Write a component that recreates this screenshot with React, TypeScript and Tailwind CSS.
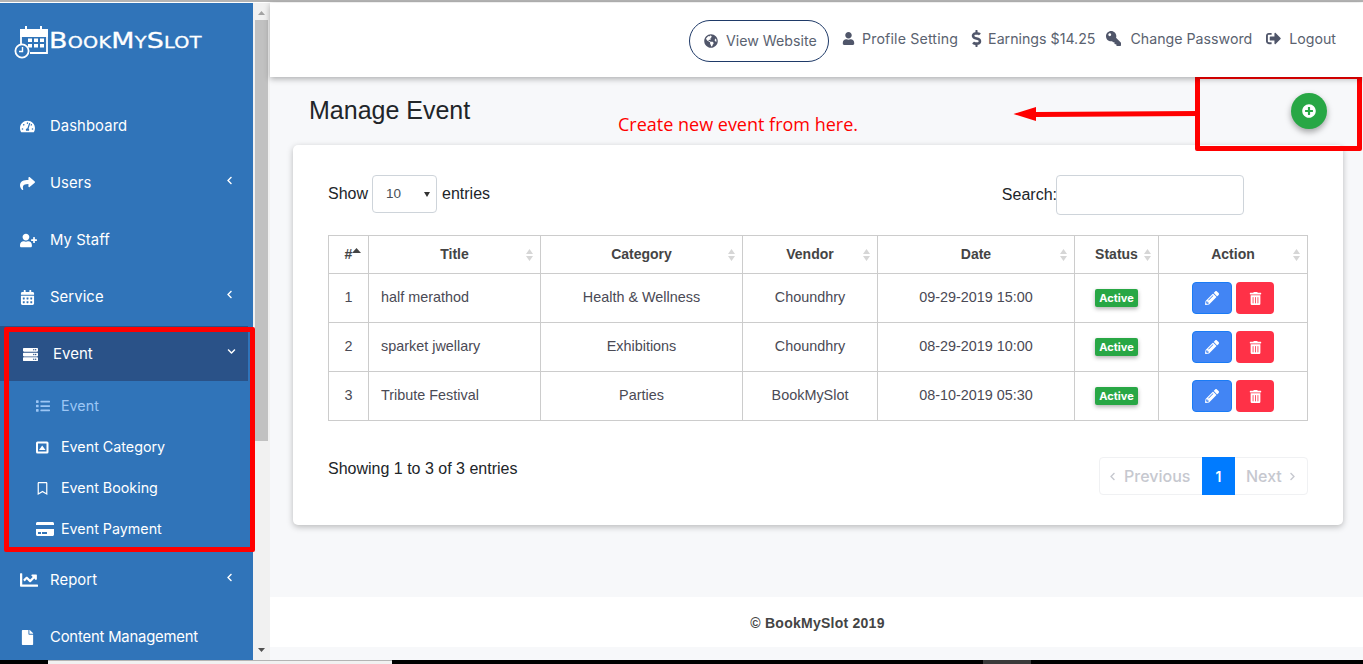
import React from "react";
import {
  FaTachometerAlt, FaShare, FaUserPlus, FaCalendarAlt, FaServer, FaList, FaRegBookmark, FaCreditCard,
  FaChartLine, FaFile, FaGlobeAmericas, FaUser, FaDollarSign, FaKey, FaSignOutAlt, FaPencilAlt, FaTrashAlt, FaPlusCircle,
  FaChevronLeft, FaChevronDown, FaChevronRight,
} from "react-icons/fa";

const Logo = () => (
  <svg width="36" height="36" viewBox="0 0 36 36" fill="none" stroke="white" strokeWidth="1.8" className="shrink-0">
    <path d="M7 20V6h26v23H16" />
    <path d="M7 6h26v6H7z" fill="white" />
    <path d="M12 2v6M27 2v6" strokeWidth="2" />
    <g fill="white" stroke="none">
      <rect x="14" y="14.5" width="4" height="3.5" /><rect x="20" y="14.5" width="4" height="3.5" /><rect x="26" y="14.5" width="4" height="3.5" />
      <rect x="14" y="20" width="4" height="3.5" /><rect x="20" y="20" width="4" height="3.5" /><rect x="26" y="20" width="4" height="3.5" />
    </g>
    <circle cx="8" cy="27" r="6.6" fill="#3074b9" strokeWidth="1.8" />
    <path d="M8.5 23v4.5H5" strokeWidth="1.4" />
  </svg>
);

const PictureIcon = () => (
  <svg width="13" height="13" viewBox="0 0 13 13">
    <rect x="0" y="0.500" width="12.500" height="12" rx="1.500" fill="white" />
    <rect x="2" y="2.500" width="8.500" height="8" fill="#3074b9" />
    <path d="M3 9l3.200-4.500L9.500 9z" fill="white" />
  </svg>
);

const TopItem = ({ icon, label, caret, tight }: { icon: React.ReactNode; label: string; caret?: boolean; tight?: boolean }) => (
  <div className="h-[57px] flex items-center pl-[20px] pr-[18px] text-white text-[14.8px]">
    <span className="w-[30px] flex items-center">{icon}</span>
    <span className={`flex-1 ${tight ? "tracking-[-0.17px]" : "tracking-[0.1px]"}`}>{label}</span>
    {caret && <FaChevronLeft size={9} className="-mt-[6px] mr-[1px]" />}
  </div>
);

const SubItem = ({ icon, label, active }: { icon: React.ReactNode; label: string; active?: boolean }) => (
  <div className={`h-[41px] flex items-center pl-[36px] text-[14.3px] ${active ? "text-[#9cc6f5]" : "text-white"}`}>
    <span className="w-[25px] flex items-center">{icon}</span>
    <span>{label}</span>
  </div>
);

const NavLink = ({ icon, label, gap, wide }: { icon: React.ReactNode; label: string; gap: string; wide?: boolean }) => (
  <div className="flex items-center text-[#5a6270] text-[14.2px]">
    <span className={`flex items-center text-[#50566a] ${gap}`}>{icon}</span>
    <span className={wide ? "tracking-[0.15px]" : ""}>{label}</span>
  </div>
);

const SortArrows = () => (
  <svg width="7" height="12" viewBox="0 0 7 12" className="absolute right-[7px] top-1/2 -translate-y-1/2" fill="#d6d6d6">
    <path d="M3.500 0L7 5H0zM3.500 12L0 7h7z" />
  </svg>
);

const rows = [
  ["1", "half merathod", "Health & Wellness", "Choundhry", "09-29-2019 15:00"],
  ["2", "sparket jwellary", "Exhibitions", "Choundhry", "08-29-2019 10:00"],
  ["3", "Tribute Festival", "Parties", "BookMySlot", "08-10-2019 05:30"],
];
const headers = ["Title", "Category", "Vendor", "Date", "Status", "Action"];

export default function App() {
  return (
    <div className="relative w-[1363px] h-[664px] overflow-hidden flex flex-col bg-white" style={{ fontFamily: "Inter, sans-serif" }}>
      <div className="h-[3px] shrink-0 bg-white border-t-2 border-[#b4b4b4]" />
      <div className="flex h-[657px] shrink-0">
        {/* Sidebar */}
        <aside className="w-[253px] shrink-0 bg-[#3074b9] overflow-hidden">
          <div className="h-[94.5px] flex items-start pl-[14px] pt-[21px]">
            <Logo />
            <span className="inline-block origin-left scale-x-[1.28] -ml-[1px] text-white text-[21px] leading-[30px] tracking-[0.2px] mt-[2px]" style={{ fontFamily: "'DejaVu Sans', sans-serif", fontVariant: "small-caps", WebkitTextStroke: "0.3px white" }}>BookMySlot</span>
          </div>
          <TopItem icon={<FaTachometerAlt size={15} />} label="Dashboard" />
          <TopItem icon={<FaShare size={15} />} label="Users" caret />
          <TopItem icon={<FaUserPlus size={17} />} label="My Staff" />
          <TopItem icon={<FaCalendarAlt size={15} />} label="Service" caret />
          <div className="h-[55px] pt-[2px] w-[248px] bg-[#2a5288] flex items-center pl-[23px] pr-[12px] text-white text-[15px]">
            <span className="w-[30px] flex items-center"><FaServer size={15} /></span>
            <span className="flex-1">Event</span>
            <FaChevronDown size={9} className="-mt-[6px]" />
          </div>
          <div className="pt-[5px] pb-[2px]">
            <SubItem active icon={<FaList size={14} />} label="Event" />
            <SubItem icon={<PictureIcon />} label="Event Category" />
            <SubItem icon={<FaRegBookmark size={13} />} label="Event Booking" />
            <SubItem icon={<FaCreditCard size={18} />} label="Event Payment" />
          </div>
          <TopItem icon={<FaChartLine size={18} />} label="Report" caret />
          <TopItem icon={<FaFile size={15} />} label="Content Management" tight />
        </aside>

        {/* Scrollbar */}
        <div className="w-[17px] shrink-0 bg-[#f1f1f1] flex flex-col items-center">
          <svg width="9" height="17" viewBox="0 0 9 17" fill="#a3a3a3" className="shrink-0"><path d="M1 12l3.500-4L8 12z" /></svg>
          <div className="w-[13px] h-[421px] bg-[#c1c1c1] shrink-0" />
          <div className="flex-1" />
          <svg width="9" height="17" viewBox="0 0 9 17" fill="#505050" className="shrink-0"><path d="M1 5h7L4.500 9z" /></svg>
        </div>

        {/* Content */}
        <div className="flex-1 flex flex-col min-w-0 bg-[#f7f8fa]">
          <header className="h-[74px] shrink-0 bg-white flex items-center justify-end pr-[27px] shadow-[0_2px_6px_rgba(0,0,0,0.3)] relative z-10">
            <div className="h-[42px] w-[140px] rounded-full border border-[#1f3a68] flex items-center pl-[14px] mr-[13px] mt-[1px]">
              <span className="w-[22px] flex items-center text-[#50566a]"><FaGlobeAmericas size={14} /></span>
              <span className="text-[#5a6270] text-[14.2px]">View Website</span>
            </div>
            <div className="flex items-center -mt-[2px]">
              <NavLink icon={<FaUser size={13} />} label="Profile Setting" gap="w-[20px]" wide />
              <div className="w-[10px]" />
              <NavLink icon={<FaDollarSign size={17} />} label="Earnings $14.25" gap="w-[20px]" />
              <div className="w-[11px]" />
              <NavLink icon={<FaKey size={15} className="-scale-x-100" />} label="Change Password" gap="w-[24px]" />
              <div className="w-[14px]" />
              <NavLink icon={<FaSignOutAlt size={15} />} label="Logout" gap="w-[23px]" />
            </div>
          </header>

          <main className="flex-1 flex flex-col" style={{ fontFamily: "'Liberation Sans', sans-serif" }}>
            <div className="h-[68px] shrink-0 flex justify-between items-start pl-[39px] pr-[36px]">
              <h1 className="text-[25px] leading-[30px] text-[#212529] mt-[18px]">Manage Event</h1>
              <div className="w-[36px] h-[36px] mt-[16px] rounded-full bg-[#28a745] text-white flex items-center justify-center shadow-[0_3px_6px_rgba(0,0,0,0.35)]">
                <FaPlusCircle size={14} />
              </div>
            </div>

            <section className="ml-[23px] mr-[20px] h-[380px] shrink-0 bg-white rounded-[5px] shadow-[0_2px_6px_rgba(0,0,0,0.25)] px-[35px] pt-[30px]">
              <div className="flex justify-between h-[60px] text-[16px] text-[#212529]">
                <div className="flex items-start">
                  <span className="leading-[38px]">Show</span>
                  <div className="ml-[4px] w-[65px] h-[38px] border border-[#ced4da] rounded-[4px] flex items-center pl-[13px] pr-[6px] text-[13.5px] text-[#495057]">
                    <span className="flex-1">10</span>
                    <svg width="6" height="5" viewBox="0 0 6 5" fill="#333"><path d="M0 0h6L3 5z" /></svg>
                  </div>
                  <span className="leading-[38px] ml-[5px]">entries</span>
                </div>
                <div className="flex items-start mr-[64px]">
                  <span className="leading-[40px] mr-[-1px]">Search:</span>
                  <div className="w-[188px] h-[40px] border border-[#ced4da] rounded-[4px]" />
                </div>
              </div>

              <table className="w-[980px] table-fixed border-collapse text-[14px] text-[#4a4a55]">
                <colgroup>
                  <col className="w-[40px]" /><col className="w-[172px]" /><col className="w-[202px]" /><col className="w-[135px]" />
                  <col className="w-[197px]" /><col className="w-[84px]" /><col className="w-[149px]" />
                </colgroup>
                <thead>
                  <tr className="h-[38px]">
                    <th className="relative border border-[#cccccc] text-center font-bold text-[#444]">
                      <span>#</span>
                      <svg width="9" height="5" viewBox="0 0 9 5" fill="#444" className="absolute right-[7px] top-[12px]"><path d="M4.500 0L9 5H0z" /></svg>
                    </th>
                    {headers.map((h) => (
                      <th key={h} className="relative border border-[#cccccc] text-center font-bold text-[#444]">
                        <span>{h}</span>
                        <SortArrows />
                      </th>
                    ))}
                  </tr>
                </thead>
                <tbody>
                  {rows.map((r) => (
                    <tr key={r[0]} className="h-[49px] text-[14.4px]">
                      <td className="border border-[#cccccc] text-center pb-[1px]">{r[0]}</td>
                      <td className="border border-[#cccccc] pl-[12px] pb-[1px]">{r[1]}</td>
                      <td className="border border-[#cccccc] text-center pb-[1px]">{r[2]}</td>
                      <td className="border border-[#cccccc] text-center pb-[1px]">{r[3]}</td>
                      <td className="border border-[#cccccc] text-center pb-[1px]">{r[4]}</td>
                      <td className="border border-[#cccccc] text-center pb-[1px]">
                        <span className="inline-flex items-center h-[18px] px-[4px] rounded-[2px] bg-[#28a745] text-white text-[11px] font-bold shadow-[0_2px_4px_rgba(0,0,0,0.3)]" style={{ fontFamily: "Inter, sans-serif" }}>Active</span>
                      </td>
                      <td className="border border-[#cccccc]">
                        <div className="flex justify-center gap-[4px]">
                          <div className="w-[40px] h-[32px] rounded-[4px] bg-[#4285f4] border border-[#1a7bf5] text-white flex items-center justify-center"><FaPencilAlt size={14} /></div>
                          <div className="w-[38px] h-[32px] rounded-[4px] bg-[#ff3147] text-white flex items-center justify-center"><FaTrashAlt size={13} /></div>
                        </div>
                      </td>
                    </tr>
                  ))}
                </tbody>
              </table>

              <div className="flex justify-between items-start mt-[36px]">
                <span className="text-[16px] leading-[24px] text-[#212529]">Showing 1 to 3 of 3 entries</span>
                <div className="flex h-[38px] text-[16px] font-medium text-[#c6c8cf] border border-[#f0f1f3] rounded-[4px]" style={{ fontFamily: "Inter, sans-serif" }}>
                  <div className="w-[102px] flex items-center pl-[8px] gap-[7px]"><FaChevronLeft size={9} />Previous</div>
                  <div className="w-[33px] -my-[1px] bg-[#007bff] text-white text-[14px] font-semibold flex items-center justify-center">1</div>
                  <div className="w-[72px] flex items-center pl-[11px] gap-[6px]">Next<FaChevronRight size={9} /></div>
                </div>
              </div>
            </section>

            <div className="h-[72px] shrink-0" />
            <footer className="h-[50px] shrink-0 bg-white flex items-center justify-center pt-[2px] pl-[2px] text-[14px] font-bold tracking-[0.25px] text-[#444]">© BookMySlot 2019</footer>
            <div className="flex-1" />
          </main>
        </div>
      </div>

      {/* bottom strip */}
      <div className="h-[4px] shrink-0 flex bg-black">
        <div className="w-[48px]" />
        <div className="w-[344px] bg-[#f1f1f1] border-t border-[#b4b4b4]" />
        <div className="w-[591px]" />
        <div className="w-[48px] bg-[#3a3a3a]" />
      </div>

      {/* annotations */}
      <div className="absolute left-[4px] top-[327px] w-[251px] h-[225px] border-[5px] border-[#ff0000] rounded-[2px]" />
      <div className="absolute left-[1195px] top-[74px] w-[167px] h-[77px] border-[5px] border-[#ff0000] rounded-[2px]" />
      <svg className="absolute left-[1010px] top-[100px]" width="190" height="30" viewBox="0 0 190 30">
        <path d="M3.500 14L26 7V12L188 11V16L26 17V21z" fill="#ff0000" />
      </svg>
      <span className="absolute left-[618px] top-[112px] text-[#ff0000] text-[18px] leading-[24px]" style={{ fontFamily: "'Open Sans', sans-serif" }}>Create new event from here.</span>
    </div>
  );
}
